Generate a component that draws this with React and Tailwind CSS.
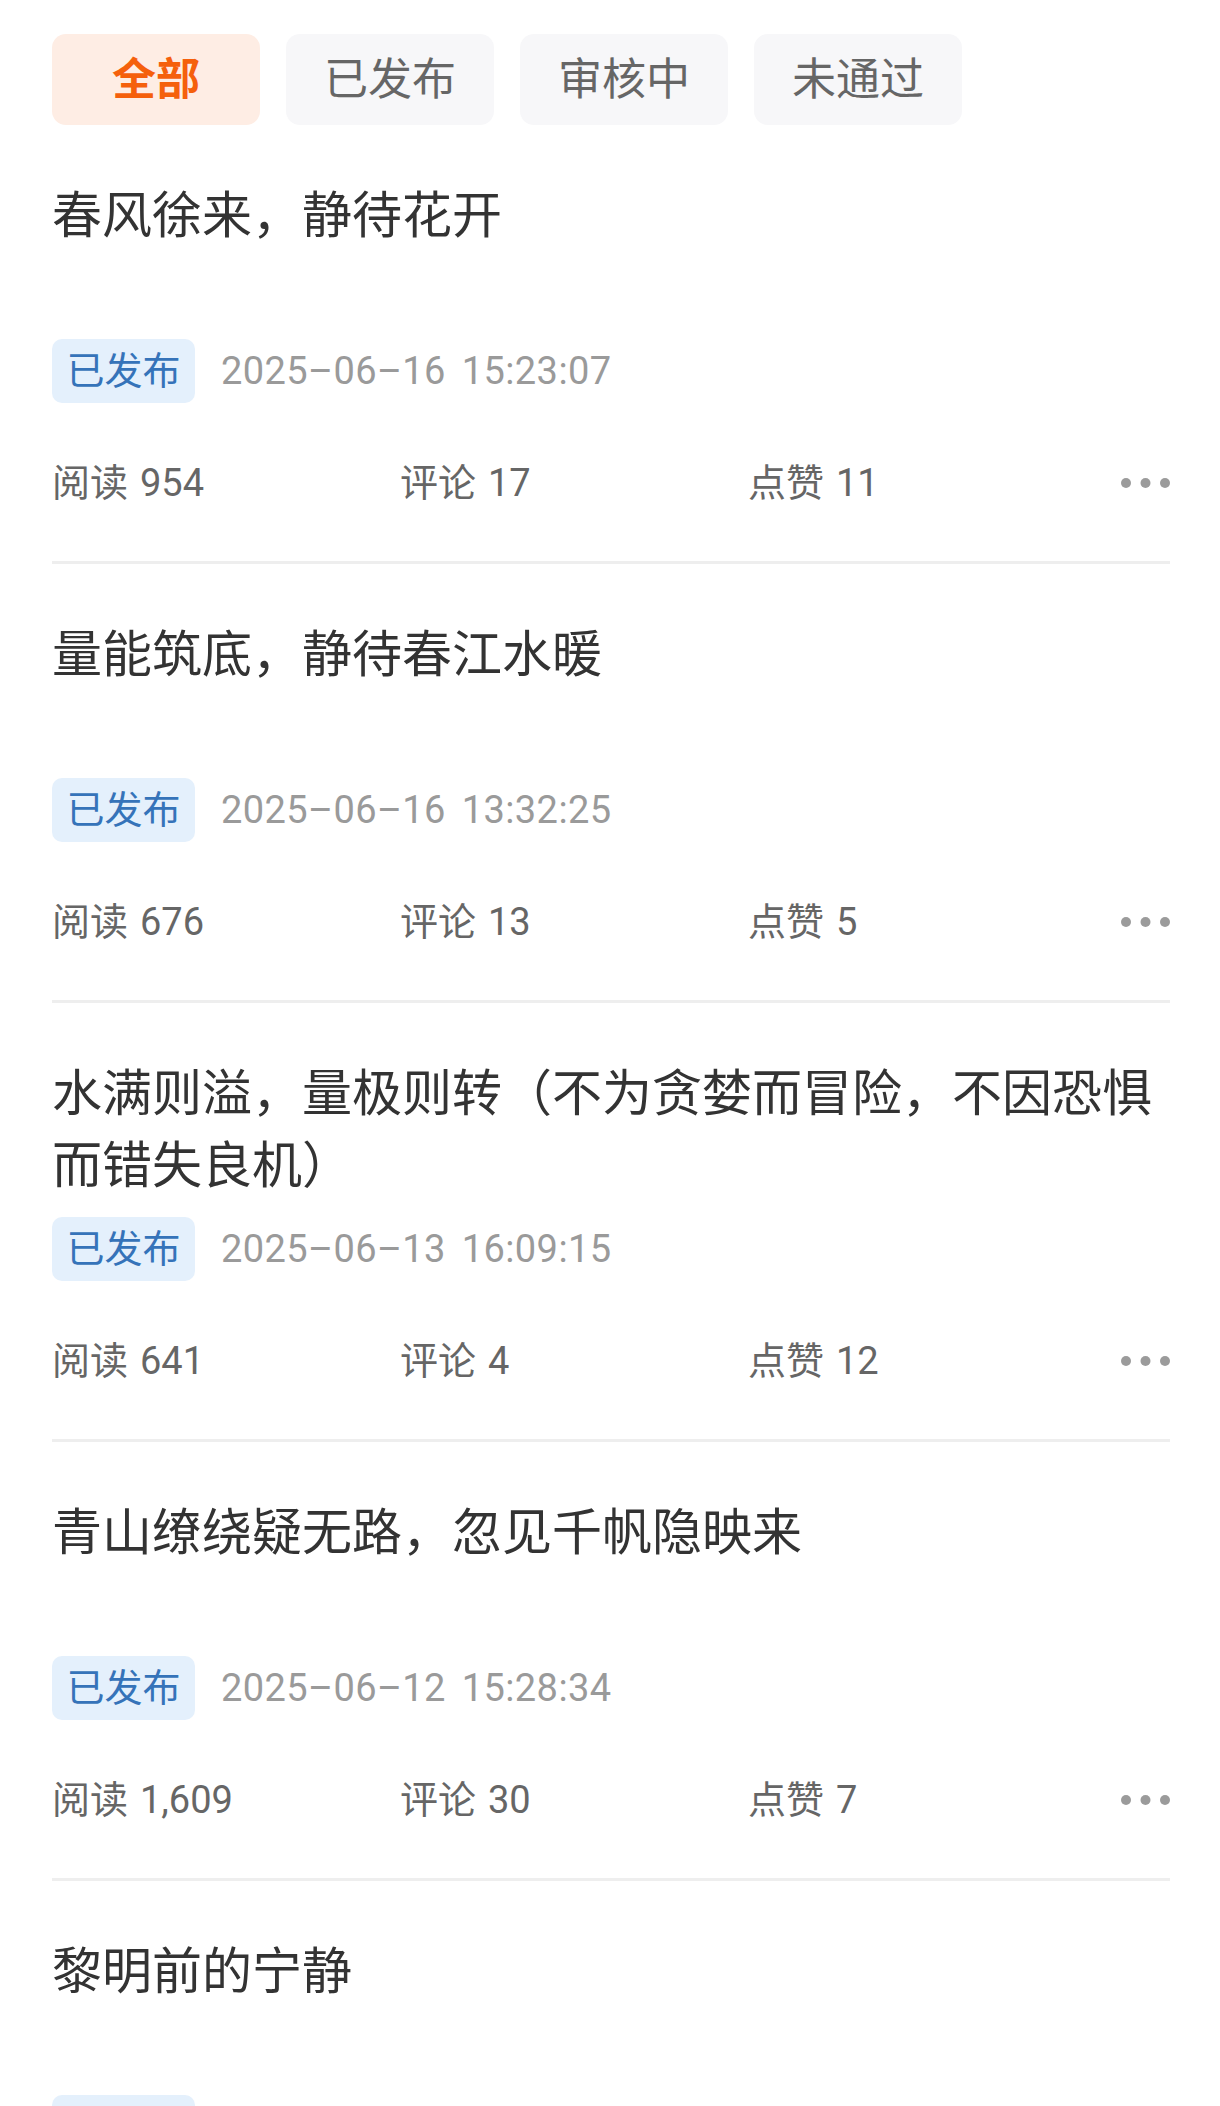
import React from "react";

const tabs = [
  { label: "全部", active: true },
  { label: "已发布" },
  { label: "审核中" },
  { label: "未通过" },
];

const items = [
  { title: "春风徐来，静待花开", day: "2025–06–16", time: "15:23:07", read: "954", comment: "17", like: "11" },
  { title: "量能筑底，静待春江水暖", day: "2025–06–16", time: "13:32:25", read: "676", comment: "13", like: "5" },
  { title: "水满则溢，量极则转（不为贪婪而冒险，不因恐惧而错失良机）", day: "2025–06–13", time: "16:09:15", read: "641", comment: "4", like: "12" },
  { title: "青山缭绕疑无路，忽见千帆隐映来", day: "2025–06–12", time: "15:28:34", read: "1,609", comment: "30", like: "7" },
  { title: "黎明前的宁静", day: "2025–06–12", time: "09:15:42", read: "1,203", comment: "9", like: "6" },
];

function Dots() {
  return (
    <svg width="49" height="10" viewBox="0 0 49 10" className="ml-auto shrink-0">
      <circle cx="5" cy="5" r="5" fill="#9b9b9b" />
      <circle cx="24.5" cy="5" r="5" fill="#9b9b9b" />
      <circle cx="44" cy="5" r="5" fill="#9b9b9b" />
    </svg>
  );
}

function Stat({ label, value }) {
  return (
    <div className="w-[348px] flex items-center gap-[12px] text-[38px] leading-[60px] text-[#666666]">
      <span>{label}</span>
      <span>{value}</span>
    </div>
  );
}

function Item({ it }) {
  return (
    <div className="pt-[55px]">
      <div className="h-[144px] text-[50px] leading-[72px] text-[#333333] line-clamp-2 overflow-hidden">
        {it.title}
      </div>
      <div className="mt-[15px] flex items-center">
        <div className="h-[64px] px-[14.5px] rounded-[10px] bg-[#e4f0fc] text-[#3573b9] text-[38px] leading-[64px] flex items-center">
          已发布
        </div>
        <div className="ml-[26px] flex gap-[16px] text-[38px] leading-[64px] tracking-[0.4px] text-[#9a9a9a]">
          <span>{it.day}</span>
          <span>{it.time}</span>
        </div>
      </div>
      <div className="mt-[50px] h-[60px] flex items-center">
        <Stat label="阅读" value={it.read} />
        <Stat label="评论" value={it.comment} />
        <Stat label="点赞" value={it.like} />
        <Dots />
      </div>
      <div className="mt-[48px] h-[3px] bg-[#eeeeee]" />
    </div>
  );
}

export default function App() {
  return (
    <div className="w-[1220px] h-[2106px] overflow-hidden bg-white font-[Roboto,'Noto_Sans_CJK_SC',sans-serif]">
      <div className="pt-[34px] pl-[52px] flex gap-[26px]">
        {tabs.map((t) => (
          <div
            key={t.label}
            className={
              t.active
                ? "w-[208px] h-[91px] rounded-[14px] bg-[#feede4] text-[#f5600c] font-bold text-[44px] flex items-center justify-center"
                : "w-[208px] h-[91px] rounded-[14px] bg-[#f7f7f9] text-[#666666] text-[44px] flex items-center justify-center"
            }
          >
            {t.label}
          </div>
        ))}
      </div>
      <div className="pl-[52px] pr-[50px]">
        {items.map((it) => (
          <Item key={it.title} it={it} />
        ))}
      </div>
    </div>
  );
}
